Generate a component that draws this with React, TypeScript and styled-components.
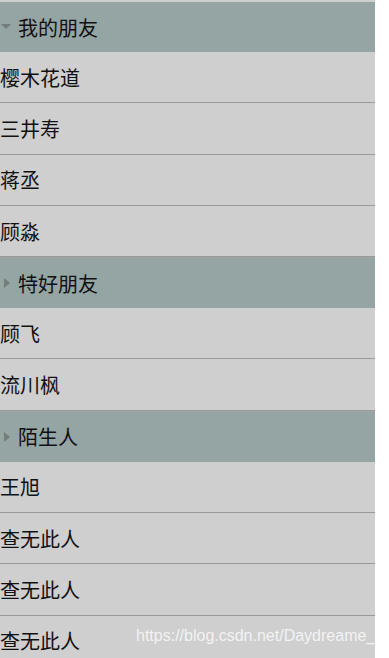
import React from "react";
import styled, { createGlobalStyle } from "styled-components";

const GlobalStyle = createGlobalStyle`
  html, body {
    margin: 0;
    padding: 0;
    background: #fff;
    overflow: hidden;
  }
  body {
    font-family: "Noto Sans CJK SC", "Noto Sans", sans-serif;
  }
`;

const Wrap = styled.div`
  position: relative;
  width: 375px;
  height: 658px;
  overflow: hidden;
  background: #cfcfcf;
  padding-top: 2px;
  box-sizing: border-box;
`;

const Group = styled.div<{ $first: boolean }>`
  display: flex;
  flex-direction: column;
  border-top: ${(p) => (p.$first ? "none" : "1px solid #a3a3a3")};
`;

const Header = styled.div`
  display: flex;
  align-items: center;
  height: 50px;
  background: #95a5a3;
  color: #111;
  font-size: 20px;
  cursor: pointer;
`;

const Arrow = styled.span`
  display: flex;
  align-items: center;
  justify-content: center;
  width: 18px;
  flex: none;
`;

const Item = styled.div`
  display: flex;
  align-items: center;
  height: 51.3px;
  padding-top: 1px;
  box-sizing: border-box;
  border-bottom: 1px solid #9a9a9a;
  color: #111;
  font-size: 20px;
  line-height: 1;
`;

const Watermark = styled.div`
  position: absolute;
  left: 136px;
  top: 627px;
  font-family: "Liberation Sans", Arial, sans-serif;
  font-size: 16px;
  color: rgba(255, 255, 255, 0.75);
  white-space: nowrap;
  pointer-events: none;
`;

const groups = [
  { name: "我的朋友", open: true, items: ["樱木花道", "三井寿", "蒋丞", "顾淼"] },
  { name: "特好朋友", open: false, items: ["顾飞", "流川枫"] },
  { name: "陌生人", open: false, items: ["王旭", "查无此人", "查无此人", "查无此人"] },
];

function Tri({ open }: { open: boolean }) {
  return open ? (
    <svg width="10" height="6" viewBox="0 0 10 6" style={{ marginLeft: -6 }}>
      <polygon points="0,0 10,0 5,5" fill="#757d7c" />
    </svg>
  ) : (
    <svg width="6" height="10" viewBox="0 0 6 10" style={{ marginLeft: -4 }}>
      <polygon points="0,0 6,5 0,10" fill="#757d7c" />
    </svg>
  );
}

export default function App() {
  return (
    <>
      <GlobalStyle />
      <Wrap>
        {groups.map((g, i) => (
          <Group key={i} $first={i === 0}>
            <Header>
              <Arrow>
                <Tri open={g.open} />
              </Arrow>
              {g.name}
            </Header>
            {g.items.map((it, j) => (
              <Item key={j}>{it}</Item>
            ))}
          </Group>
        ))}
        <Watermark>https://blog.csdn.net/Daydreame_r</Watermark>
      </Wrap>
    </>
  );
}
